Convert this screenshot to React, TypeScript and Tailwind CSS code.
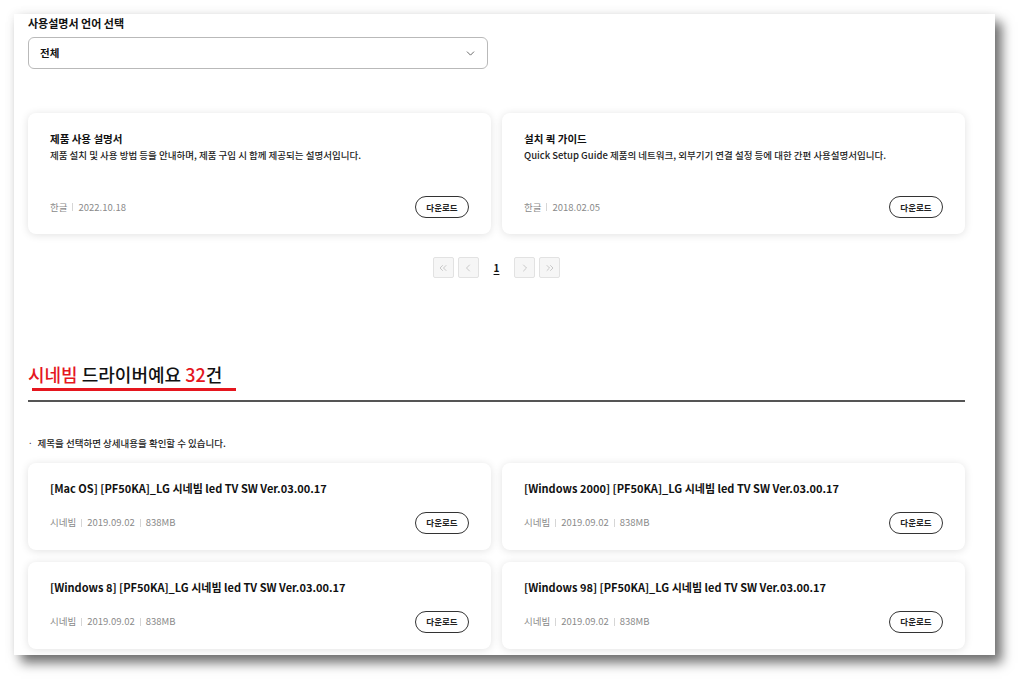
import { FC } from "react";
import {
  ChevronDown,
  ChevronLeft,
  ChevronRight,
  ChevronsLeft,
  ChevronsRight,
} from "lucide-react";

const font = { fontFamily: '"Noto Sans CJK KR", "Noto Sans", sans-serif' };

interface MetaProps {
  items: string[];
}

const Meta: FC<MetaProps> = ({ items }) => (
  <div className="flex items-center text-[9.5px] text-[#8a8a8a]">
    {items.map((it, i) => (
      <span key={it} className="flex items-center">
        {i > 0 && <span className="mx-[5px] h-[8px] w-px bg-[#d6d6d6]" />}
        {it}
      </span>
    ))}
  </div>
);

const DownloadBtn: FC = () => (
  <button className="flex h-[22px] w-[54px] items-center justify-center rounded-full border border-[#333] bg-white text-[8.5px] font-bold text-[#222]">
    다운로드
  </button>
);

interface ManualCardProps {
  title: string;
  desc: string;
  date: string;
}

const ManualCard: FC<ManualCardProps> = ({ title, desc, date }) => (
  <div className="flex h-[121px] flex-col rounded-[8px] bg-white px-[22px] pb-[16px] pt-[18px] shadow-[0_1px_8px_rgba(0,0,0,0.12)]">
    <div className="text-[10.5px] font-bold leading-[15px] text-[#111]">{title}</div>
    <div className="mt-[3px] text-[9.5px] font-medium leading-[13px] text-[#222]">{desc}</div>
    <div className="mt-auto flex items-center justify-between">
      <Meta items={["한글", date]} />
      <DownloadBtn />
    </div>
  </div>
);

interface DriverCardProps {
  title: string;
}

const DriverCard: FC<DriverCardProps> = ({ title }) => (
  <div className="flex h-[87px] flex-col rounded-[8px] bg-white px-[22px] pb-[16px] pt-[17px] shadow-[0_1px_8px_rgba(0,0,0,0.12)]">
    <div className="text-[11px] font-bold leading-[16px] text-[#111]">{title}</div>
    <div className="mt-auto flex items-center justify-between">
      <Meta items={["시네빔", "2019.09.02", "838MB"]} />
      <DownloadBtn />
    </div>
  </div>
);

const PageBox: FC<{ children: React.ReactNode }> = ({ children }) => (
  <div className="flex h-[21px] w-[21px] items-center justify-center rounded-[2px] border border-[#e2e2e2] bg-[#f6f6f6] text-[#b5b5b5]">
    {children}
  </div>
);

const drivers = [
  "[Mac OS] [PF50KA]_LG 시네빔 led TV SW Ver.03.00.17",
  "[Windows 2000] [PF50KA]_LG 시네빔 led TV SW Ver.03.00.17",
  "[Windows 8] [PF50KA]_LG 시네빔 led TV SW Ver.03.00.17",
  "[Windows 98] [PF50KA]_LG 시네빔 led TV SW Ver.03.00.17",
];

const App: FC = () => {
  return (
    <div className="h-[684px] w-[1024px] overflow-hidden bg-white pl-[14px] pt-[14px]" style={font}>
      <div className="h-[641px] w-[981px] overflow-hidden bg-white pl-[14px] pr-[30px] shadow-[7px_8px_11px_rgba(0,0,0,0.55),0_0_10px_rgba(0,0,0,0.08)]">
        <div className="text-[11px] font-bold leading-[18px] text-[#111]">사용설명서 언어 선택</div>
        <div className="mt-[5px] flex h-[32px] w-[460px] items-center justify-between rounded-[6px] border border-[#b9b9b9] pl-[11px] pr-[10px]">
          <span className="text-[10.5px] font-bold text-[#111]">전체</span>
          <ChevronDown size={13} strokeWidth={1.6} className="text-[#555]" />
        </div>

        <div className="mt-[44px] grid grid-cols-2 gap-[11px]">
          <ManualCard
            title="제품 사용 설명서"
            desc="제품 설치 및 사용 방법 등을 안내하며, 제품 구입 시 함께 제공되는 설명서입니다."
            date="2022.10.18"
          />
          <ManualCard
            title="설치 퀵 가이드"
            desc="Quick Setup Guide 제품의 네트워크, 외부기기 연결 설정 등에 대한 간편 사용설명서입니다."
            date="2018.02.05"
          />
        </div>

        <div className="mt-[23px] flex items-center justify-center gap-[4px]">
          <PageBox>
            <ChevronsLeft size={12} strokeWidth={1.4} />
          </PageBox>
          <PageBox>
            <ChevronLeft size={12} strokeWidth={1.4} />
          </PageBox>
          <span className="mx-[11px] text-[10px] font-bold text-[#111] underline underline-offset-2">1</span>
          <PageBox>
            <ChevronRight size={12} strokeWidth={1.4} />
          </PageBox>
          <PageBox>
            <ChevronsRight size={12} strokeWidth={1.4} />
          </PageBox>
        </div>

        <div className="mt-[84px] inline-flex flex-col">
          <h2 className="text-[18px] font-medium leading-[24px] text-[#111]">
            <span className="text-[#e5161e]">시네빔</span> 드라이버예요{" "}
            <span className="text-[#e5161e]">32</span>건
          </h2>
          <div className="ml-[4px] mt-[2px] h-[3px] w-[204px] bg-[#e5161e]" />
        </div>
        <div className="mt-[9px] h-[1.5px] w-full bg-[#555]" />

        <div className="mt-[35px] flex items-center text-[9.5px] font-medium leading-[12px] text-[#222]">
          <span className="mr-[5px] text-[8px]">·</span>
          제목을 선택하면 상세내용을 확인할 수 있습니다.
        </div>

        <div className="mt-[14px] grid grid-cols-2 gap-x-[11px] gap-y-[12px]">
          {drivers.map((d) => (
            <DriverCard key={d} title={d} />
          ))}
        </div>
      </div>
    </div>
  );
};

export default App;
